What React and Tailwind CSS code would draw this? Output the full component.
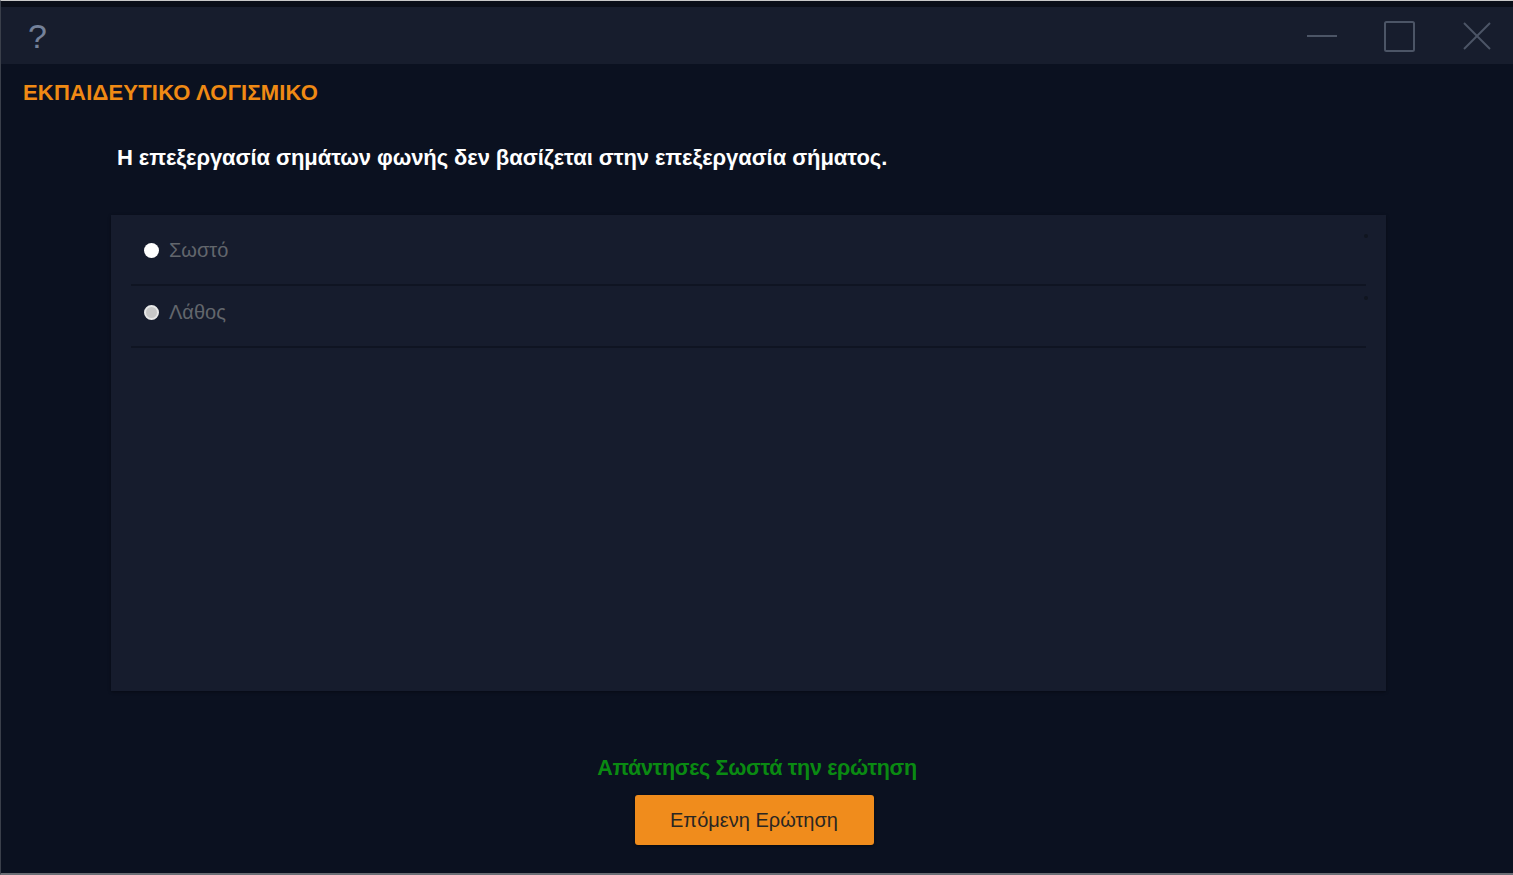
export default function App() {
  return (
    <div
      className="w-[1513px] h-[875px] flex flex-col bg-[#0b1120] border-t border-t-[#c9c9c9] border-l border-l-[#3a3f4a] border-b-2 border-b-[#6b6e75] overflow-hidden"
      style={{ fontFamily: '"Liberation Sans", Arial, sans-serif' }}
    >
      <div className="h-[6px] bg-[#0a0e18]" />
      <div className="h-[57px] bg-[#171d2d] flex items-center justify-between pl-[27px] pr-[21px]">
        <span className="text-[34px] leading-none text-[#74819a] font-light">?</span>
        <div className="flex items-center">
          <svg width="32" height="32" viewBox="0 0 32 32">
            <line x1="1" y1="16" x2="31" y2="16" stroke="#4c5566" strokeWidth="2" />
          </svg>
          <svg width="32" height="32" viewBox="0 0 32 32" className="ml-[45px]">
            <rect x="2" y="2" width="29" height="29" rx="1.5" fill="none" stroke="#4c5566" strokeWidth="2" />
          </svg>
          <svg width="30" height="30" viewBox="0 0 30 30" className="ml-[47px]">
            <line x1="2" y1="2" x2="28" y2="28" stroke="#4c5566" strokeWidth="2" />
            <line x1="28" y1="2" x2="2" y2="28" stroke="#4c5566" strokeWidth="2" />
          </svg>
        </div>
      </div>
      <div className="flex-1 flex flex-col">
        <div className="pl-[22px] pt-[18px] text-[22px] font-bold text-[#f08a14] leading-none tracking-[0.2px]">
          ΕΚΠΑΙΔΕΥΤΙΚΟ ΛΟΓΙΣΜΙΚΟ
        </div>
        <div className="pl-[116px] pt-[43px] text-[22px] font-bold text-white leading-none tracking-[-0.08px]">
          Η επεξεργασία σημάτων φωνής δεν βασίζεται στην επεξεργασία σήματος.
        </div>
        <div className="ml-[110px] mt-[46px] w-[1275px] h-[476px] bg-[#161c2d] shadow-[0_1px_3px_rgba(0,0,0,0.4)] px-[20px] pt-[9px]">
          {["Σωστό", "Λάθος"].map((t, i) => (
            <div key={t} className="relative h-[62px] border-b-2 border-b-[#0f1422] pl-[13px] pt-[16px]">
              <div className="flex items-center h-[20px]">
                <span
                  className={`w-[15px] h-[15px] rounded-full inline-block ${i === 0 ? "bg-white" : "bg-[#c8c8c8] border-2 border-[#e8e8e8]"}`}
                />
                <span className="text-[20px] text-[#62666c] leading-none ml-[10px]">{t}</span>
              </div>
              <span className="absolute right-[-2px] top-[10px] w-[4px] h-[4px] rounded-full bg-[#10151f]" />
            </div>
          ))}
        </div>
        <div className="flex flex-col items-center mt-[67px]">
          <div className="text-[21.5px] font-bold text-[#0a8a12] leading-none tracking-[-0.3px]">
            Απάντησες Σωστά την ερώτηση
          </div>
          <button className="mt-[15px] w-[239px] h-[50px] rounded-[3px] bg-[#f08c1c] text-[20px] text-[#2a2622] leading-none shadow-[0_1px_3px_rgba(0,0,0,0.5)] -ml-[6px]">
            Επόμενη Ερώτηση
          </button>
        </div>
      </div>
    </div>
  );
}
